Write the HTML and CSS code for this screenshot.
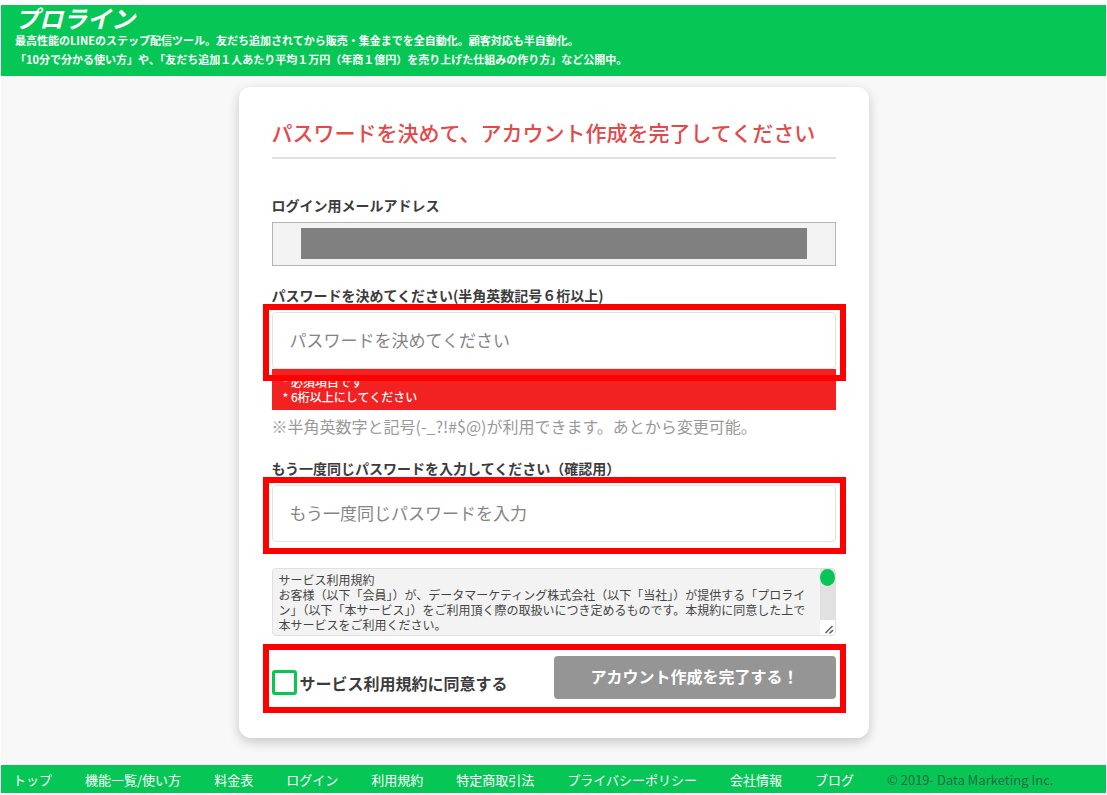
FILE: index.html
```html
<!DOCTYPE html>
<html lang="ja">
<head>
    <meta charset="UTF-8">
    <meta name="viewport" content="width=device-width, initial-scale=1.0">
    <title>プロライン</title>
    <link rel="stylesheet" href="styles.css">
</head>
<body>

    <header class="header">
        <div class="logo">プロライン</div>
        <p>最高性能のLINEのステップ配信ツール。友だち追加されてから販売・集金までを全自動化。顧客対応も半自動化。</p>
        <p>「10分で分かる使い方」や、「友だち追加１人あたり平均１万円（年商１億円）を売り上げた仕組みの作り方」など公開中。</p>
    </header>

    <main class="main">
        <form class="card">
            <h1>パスワードを決めて、アカウント作成を完了してください</h1>

            <label class="field-label" for="email">ログイン用メールアドレス</label>
            <div class="email-box">
                <input type="email" id="email" readonly>
            </div>

            <label class="field-label" for="password">パスワードを決めてください(半角英数記号６桁以上)</label>
            <div class="marked">
                <input class="text-input" type="password" id="password" placeholder="パスワードを決めてください">
            </div>
            <ul class="errors">
                <li>* 必須項目です</li>
                <li>* 6桁以上にしてください</li>
            </ul>
            <p class="hint">※半角英数字と記号(-_?!#$@)が利用できます。あとから変更可能。</p>

            <label class="field-label" for="password2">もう一度同じパスワードを入力してください（確認用）</label>
            <div class="marked">
                <input class="text-input" type="password" id="password2" placeholder="もう一度同じパスワードを入力">
            </div>

            <div class="terms">
                <textarea aria-label="サービス利用規約" rows="4" readonly>サービス利用規約
お客様（以下「会員」）が、データマーケティング株式会社（以下「当社」）が提供する「プロライン」（以下「本サービス」）をご利用頂く際の取扱いにつき定めるものです。本規約に同意した上で本サービスをご利用ください。</textarea>
                <div class="scroll">
                    <div class="scroll-track"><div class="scroll-thumb"></div></div>
                    <svg class="grip" width="15" height="15" viewBox="0 0 15 15">
                        <path d="M5.5 13L12.5 6M9.5 13.5L13 10" stroke="#666" stroke-width="1.7" fill="none"/>
                    </svg>
                </div>
            </div>

            <div class="marked submit-row">
                <label class="agree" for="agree">
                    <input type="checkbox" id="agree">
                    サービス利用規約に同意する
                </label>
                <button type="button">アカウント作成を完了する！</button>
            </div>
        </form>
    </main>

    <footer class="footer">
        <a href="#">トップ</a>
        <a href="#">機能一覧/使い方</a>
        <a href="#">料金表</a>
        <a href="#">ログイン</a>
        <a href="#">利用規約</a>
        <a href="#">特定商取引法</a>
        <a href="#">プライバシーポリシー</a>
        <a href="#">会社情報</a>
        <a href="#">ブログ</a>
        <small>© 2019- Data Marketing Inc.</small>
    </footer>

</body>
</html>
```
FILE: styles.css
```css
* {
    box-sizing: border-box;
}
body {
    display: flex;
    flex-direction: column;
    min-height: 100vh;
    margin: 0;
    padding: 5px 1px 2px;
    font-family: "Noto Sans CJK JP", sans-serif;
    background-color: #fff;
    color: #3c3c3c;
}
h1, p, ul {
    margin: 0;
    padding: 0;
}
input, textarea, button {
    font-family: inherit;
}

/* header */
.header {
    padding: 0 14px 7px;
    background-color: #06c755;
    color: #fff;
}
.header p {
    font-size: 11px;
    font-weight: bold;
    line-height: 19px;
}
.logo {
    font-size: 24px;
    font-weight: bold;
    font-style: italic;
    line-height: 26px;
}

/* card */
.main {
    flex: 1;
    padding: 11px 16px 27px;
    background-color: #f8f8f8;
}
.card {
    max-width: 630px;
    margin: 0 auto;
    padding: 32px 33px 39px;
    border-radius: 12px;
    background-color: #fff;
    box-shadow: 0 4px 12px rgba(0, 0, 0, 0.2);
}
.card h1 {
    margin-bottom: 36px;
    padding-bottom: 12px;
    border-bottom: 2px solid #e0e0e0;
    font-size: 21px;
    font-weight: 500;
    line-height: 26px;
    color: #e24a4a;
}
.field-label {
    display: block;
    margin-bottom: 7px;
    font-size: 14px;
    font-weight: bold;
    line-height: 20px;
}
.email-box {
    margin-bottom: 19px;
    padding: 5px 28px 6px;
    border: 1px solid #b5b5b5;
    background-color: #f3f3f3;
}
.email-box input {
    display: block;
    width: 100%;
    height: 31px;
    border: none;
    background-color: #808080;
}
.text-input {
    display: block;
    width: 100%;
    height: 57px;
    padding: 0 17px 2px;
    border: 1px solid #e3e3e3;
    border-radius: 4px;
    background-color: #fff;
    font-size: 17px;
}
.text-input::placeholder {
    color: #858585;
}

/* red frame around the fields to fill in */
.marked {
    position: relative;
}
.marked::after {
    content: "";
    position: absolute;
    inset: -8px -10px -12px -9px;
    border: 6px solid #f00;
    pointer-events: none;
    z-index: 1;
}
.errors {
    padding: 5px 11px 6px;
    background-color: #f32222;
    color: #fff;
    font-size: 12px;
    font-weight: 500;
    line-height: 15px;
    list-style: none;
}
.hint {
    margin: 5px 0 21px;
    font-size: 16px;
    line-height: 22px;
    color: #999;
}

/* terms */
.terms {
    display: flex;
    height: 68px;
    margin: 26px 0 20px;
    border: 1px solid #e0e0e0;
    border-radius: 4px;
    background-color: #f3f3f3;
    overflow: hidden;
}
.terms textarea {
    flex: 1;
    padding: 3px 6px 0;
    border: none;
    background: none;
    color: #444;
    font-size: 12px;
    line-height: 15px;
    resize: none;
    overflow: hidden;
}
.scroll {
    display: flex;
    flex-direction: column;
    width: 15px;
}
.scroll-track {
    flex: 1;
    background-color: #e1e1e1;
}
.scroll-thumb {
    height: 17px;
    border-radius: 50%;
    background-color: #06c755;
}
.grip {
    background-color: #fff;
}

/* submit */
.submit-row {
    display: flex;
    align-items: center;
}
.submit-row::after {
    inset: -12px -10px -14px -9px;
}
.agree {
    display: flex;
    flex: 1;
    align-items: center;
    gap: 3px;
    padding-top: 10px;
    font-size: 16px;
    font-weight: bold;
    line-height: 20px;
}
.agree input {
    appearance: none;
    width: 25px;
    height: 25px;
    margin: 0;
    border: 3px solid #06c755;
    border-radius: 3px;
    background-color: #fff;
}
.submit-row button {
    width: 50%;
    height: 43px;
    padding: 0 0 3px;
    border: none;
    border-radius: 4px;
    background-color: #959595;
    color: #fff;
    font-size: 16px;
    font-weight: bold;
}

/* footer */
.footer {
    display: flex;
    flex-wrap: wrap;
    gap: 0 33px;
    padding: 2px 12px 0;
    background-color: #06c755;
    font-size: 13px;
    line-height: 26px;
}
.footer a {
    color: #fff;
    text-decoration: none;
}
.footer small {
    font-size: 13px;
    color: #286b42;
}
```
